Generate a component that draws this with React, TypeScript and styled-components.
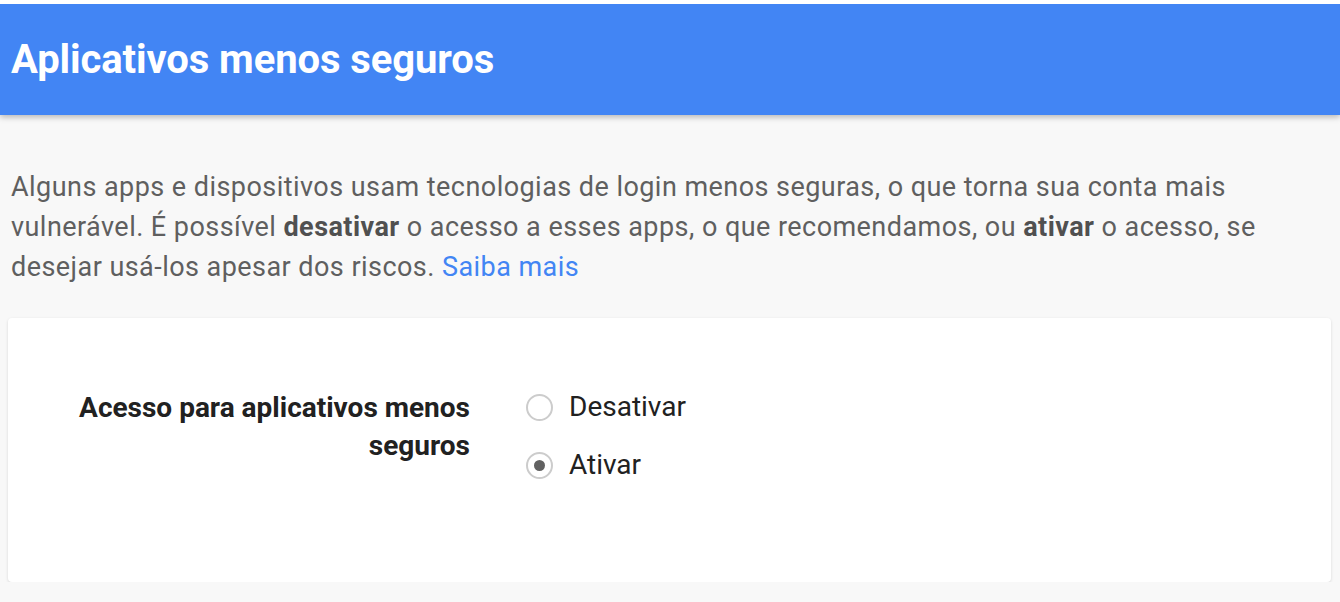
import React, { FC, useState } from "react";
import styled, { createGlobalStyle } from "styled-components";

const GlobalStyle = createGlobalStyle`
  html, body {
    margin: 0;
    padding: 0;
    background: #f8f8f8;
    font-family: Roboto, "Liberation Sans", Arial, sans-serif;
  }
  body {
    border-top: 4px solid #ffffff;
  }
`;

const Header = styled("header")`
  height: 111px;
  background: #4285f4;
  display: flex;
  align-items: center;
  padding: 0 11px;
  box-sizing: border-box;
  box-shadow: 0 2px 6px rgba(0, 0, 0, 0.28);
  position: relative;
  z-index: 1;
`;

const Title = styled("h1")`
  margin: 0;
  font-size: 40px;
  font-weight: 700;
  color: #ffffff;
  letter-spacing: -0.1px;
`;

const Main = styled("main")`
  padding: 52px 9px 0 8px;
`;

const Intro = styled("p")`
  margin: 0 0 31px 3px;
  font-size: 27px;
  line-height: 40px;
  color: #5f5f5f;
  letter-spacing: 0.45px;
  & b {
    color: #505050;
    font-weight: 700;
  }
`;

const Link = styled("a")`
  color: #4285f4;
  text-decoration: none;
`;

const Card = styled("section")`
  background: #ffffff;
  border-radius: 4px;
  box-shadow: 0 1px 3px rgba(0, 0, 0, 0.14);
  height: 264px;
  box-sizing: border-box;
  padding: 71px 0 0 0;
  display: grid;
  grid-template-columns: 462px 1fr;
  column-gap: 56px;
  align-items: start;
`;

const SettingLabel = styled("div")`
  text-align: right;
  font-size: 28px;
  line-height: 38px;
  font-weight: 700;
  color: #212121;
`;

const RadioGroup = styled("div")`
  display: flex;
  flex-direction: column;
  gap: 22px;
`;

const Option = styled("label")`
  display: flex;
  align-items: center;
  gap: 16px;
  font-size: 28px;
  color: #212121;
  cursor: pointer;
  line-height: 36px;
`;

const Circle = styled("span")<{ $checked: boolean }>`
  width: 27px;
  height: 27px;
  border-radius: 50%;
  border: 2px solid #cccccc;
  box-sizing: border-box;
  display: flex;
  align-items: center;
  justify-content: center;
  &::after {
    content: "";
    width: 11px;
    height: 11px;
    border-radius: 50%;
    background: #616161;
    display: ${({ $checked }) => ($checked ? "block" : "none")};
  }
`;

const options = ["Desativar", "Ativar"];

const App: FC = () => {
  const [selected, setSelected] = useState("Ativar");
  return (
    <>
      <GlobalStyle />
      <Header>
        <Title>Aplicativos menos seguros</Title>
      </Header>
      <Main>
        <Intro>
          Alguns apps e dispositivos usam tecnologias de login menos seguras, o
          que torna sua conta mais vulnerável. É possível <b>desativar</b> o
          acesso a esses apps, o que recomendamos, ou <b>ativar</b> o acesso, se
          desejar usá-los apesar dos riscos. <Link href="#">Saiba mais</Link>
        </Intro>
        <Card>
          <SettingLabel>
            Acesso para aplicativos menos
            <br />
            seguros
          </SettingLabel>
          <RadioGroup>
            {options.map((opt) => (
              <Option key={opt} onClick={() => setSelected(opt)}>
                <Circle $checked={selected === opt} />
                {opt}
              </Option>
            ))}
          </RadioGroup>
        </Card>
      </Main>
    </>
  );
};

export default App;
